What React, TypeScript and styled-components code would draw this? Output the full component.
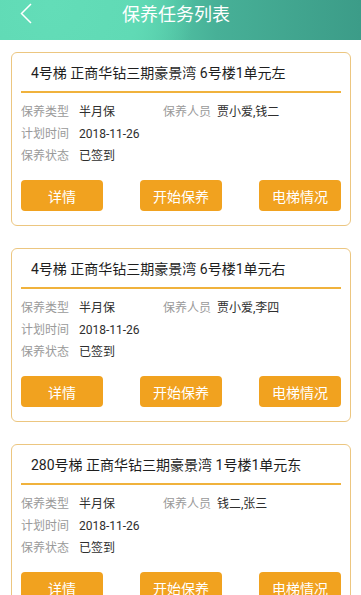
import styled, { createGlobalStyle } from "styled-components";

type Task = {
  title: string;
  type: string;
  staff: string;
  date: string;
  status: string;
};

const tasks: Task[] = [
  { title: "4号梯 正商华钻三期豪景湾 6号楼1单元左", type: "半月保", staff: "贾小爱,钱二", date: "2018-11-26", status: "已签到" },
  { title: "4号梯 正商华钻三期豪景湾 6号楼1单元右", type: "半月保", staff: "贾小爱,李四", date: "2018-11-26", status: "已签到" },
  { title: "280号梯 正商华钻三期豪景湾 1号楼1单元东", type: "半月保", staff: "钱二,张三", date: "2018-11-26", status: "已签到" },
];

const TaskCard = ({ task }: { task: Task }) => (
  <Card>
    <CardTitle>{task.title}</CardTitle>
    <Divider />
    <Info>
      <Row>
        <Field>
          <Label>保养类型</Label>
          <Value>{task.type}</Value>
        </Field>
        <Field>
          <Label $width={54}>保养人员</Label>
          <Value>{task.staff}</Value>
        </Field>
      </Row>
      <Row>
        <Field>
          <Label>计划时间</Label>
          <Value>{task.date}</Value>
        </Field>
      </Row>
      <Row>
        <Field>
          <Label>保养状态</Label>
          <Value>{task.status}</Value>
        </Field>
      </Row>
    </Info>
    <Buttons>
      <Button>详情</Button>
      <Button>开始保养</Button>
      <Button>电梯情况</Button>
    </Buttons>
  </Card>
);

export default function App() {
  return (
    <>
      <GlobalStyle />
      <Page>
        <Header>
          <Back>
            <svg width="12" height="21" viewBox="0 0 12 21">
              <path d="M11 1 L1.5 10.5 L11 20" fill="none" stroke="#fff" strokeWidth="1.5" />
            </svg>
          </Back>
          <HeaderTitle>保养任务列表</HeaderTitle>
        </Header>
        <List>
          {tasks.map((t, i) => (
            <TaskCard key={i} task={t} />
          ))}
        </List>
      </Page>
    </>
  );
}

const GlobalStyle = createGlobalStyle`
  body {
    margin: 0;
    background: #fff;
    font-family: Roboto, "Noto Sans CJK SC", sans-serif;
  }
`;

const Page = styled.div`
  width: 361px;
  height: 595px;
  overflow: hidden;
  background: #fff;
`;

const Header = styled.div`
  height: 40px;
  position: relative;
  display: flex;
  align-items: center;
  justify-content: center;
  background: radial-gradient(circle at 14% 10%, #63ddb8 0%, #60dab5 28%, transparent 46%),
    linear-gradient(90deg, #60dbb4 0%, #5ad2ae 35%, #47b097 60%, #3c9c88 100%);
`;

const Back = styled.div`
  position: absolute;
  left: 20px;
  top: 3px;
`;

const HeaderTitle = styled.div`
  color: #fff;
  font-size: 18px;
  line-height: 20px;
  margin-left: -9px;
  margin-top: -10px;
`;

const List = styled.div`
  display: flex;
  flex-direction: column;
  gap: 22px;
  padding: 12px 10px 0 11px;
`;

const Card = styled.div`
  border: 1px solid #ecc680;
  border-radius: 6px;
  padding: 0 9px 14px 9px;
`;

const CardTitle = styled.div`
  font-size: 14px;
  color: #1e1e1e;
  height: 38px;
  display: flex;
  align-items: center;
  padding-left: 10px;
`;

const Divider = styled.div`
  height: 2px;
  background: #f0b23c;
`;

const Info = styled.div`
  display: flex;
  flex-direction: column;
  padding-top: 8px;
`;

const Row = styled.div`
  display: flex;
  height: 22px;
  align-items: center;
`;

const Field = styled.div`
  display: flex;
  align-items: baseline;
  width: 142px;
  font-size: 12px;
  line-height: 16px;
`;

const Label = styled.span<{ $width?: number }>`
  color: #9a9a9a;
  width: ${(p) => p.$width ?? 58}px;
  flex-shrink: 0;
`;

const Value = styled.span`
  color: #2e2e2e;
`;

const Buttons = styled.div`
  display: flex;
  justify-content: space-between;
  margin-top: 13px;
`;

const Button = styled.div`
  width: 82px;
  height: 31px;
  border-radius: 4px;
  background: #f1a21f;
  color: #fff;
  font-size: 14px;
  display: flex;
  align-items: center;
  justify-content: center;
`;
